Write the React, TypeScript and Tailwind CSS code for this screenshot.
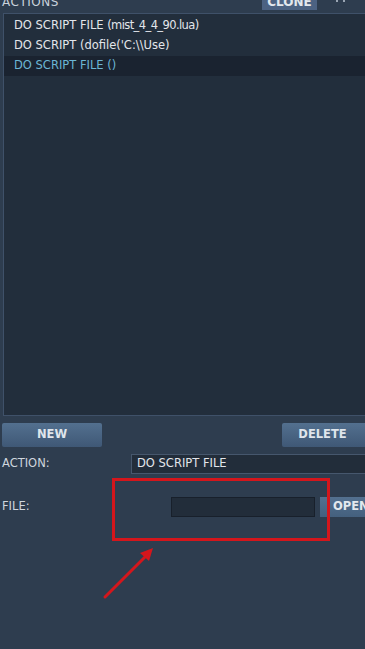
import React from "react";

const font = { fontFamily: '"DejaVu Sans", Verdana, sans-serif' };

export default function App() {
  return (
    <div
      className="relative w-[365px] h-[649px] overflow-hidden bg-[#2e3d4f] text-[#d7dde4]"
      style={font}
    >
      {/* header row (cut off at the top) */}
      <div className="flex items-center h-[22px] -mt-[9px] pl-[2px]">
        <span className="text-[12px] tracking-[0.5px] text-[#c9d2dc]">ACTIONS</span>
        <div className="ml-auto mr-[48px] w-[55px] h-[16px] flex items-center justify-center bg-[#4c6282] text-[12px] font-bold text-[#e3e8ee]">
          CLONE
        </div>
      </div>
      <div className="absolute left-[336px] top-0 w-[2px] h-[2px] bg-[#9aa6b4]" />
      <div className="absolute left-[343px] top-0 w-[2px] h-[2px] bg-[#9aa6b4]" />

      {/* list */}
      <div className="ml-[3px] mr-[-4px] h-[403px] border border-[#3f5169] bg-[#222e3c] pt-[2px]">
        <div className="h-[20px] flex items-center pl-[10px] text-[11.5px] text-[#e2e6eb] whitespace-pre">
          DO SCRIPT FILE <span className="tracking-[-0.6px]">(mist_4_4_90.lua)</span>
        </div>
        <div className="h-[20px] flex items-center pl-[10px] text-[11.5px] text-[#e2e6eb]">
          DO SCRIPT (dofile('C:\\Use)
        </div>
        <div className="h-[20px] flex items-center pl-[10px] text-[11.5px] text-[#6cb6d4] bg-[#1a2330]">
          DO SCRIPT FILE ()
        </div>
      </div>

      {/* buttons */}
      <div className="flex mt-[7px] h-[24px]">
        <div className="ml-[2px] w-[100px] rounded-[2px] flex items-center justify-center bg-gradient-to-b from-[#53708f] to-[#3f5876] text-[11.5px] font-bold text-[#dfe5ec]">
          NEW
        </div>
        <div className="ml-auto mr-[-4px] w-[87px] rounded-[2px] flex items-center justify-center bg-gradient-to-b from-[#53708f] to-[#3f5876] text-[11.5px] font-bold text-[#dfe5ec] pr-[6px]">
          DELETE
        </div>
      </div>

      {/* action row */}
      <div className="flex items-center mt-[7px] h-[20px]">
        <span className="ml-[2px] w-[129px] text-[11.5px] text-[#cfd6de]">ACTION:</span>
        <div className="flex-1 mr-[-4px] h-[20px] flex items-center pl-[5px] border border-[#46576d] bg-[#222d3a] text-[11.5px] text-[#e2e6eb]">
          DO SCRIPT FILE
        </div>
      </div>

      {/* file row */}
      <div className="flex items-center mt-[23px] h-[20px]">
        <span className="ml-[2px] w-[169px] text-[11.5px] text-[#cfd6de]">FILE:</span>
        <div className="w-[144px] h-[20px] border border-[#18202b] bg-[#222d3a]" />
        <div className="ml-[5px] flex-1 h-[20px] flex items-center pl-[13px] bg-gradient-to-b from-[#53708f] to-[#44607e] text-[11.5px] font-bold text-[#e3e8ee] whitespace-nowrap overflow-hidden">
          OPEN
        </div>
      </div>

      {/* red annotation */}
      <svg
        className="absolute left-0 top-0 pointer-events-none"
        width="365"
        height="649"
        viewBox="0 0 365 649"
      >
        <rect x="113.5" y="479.5" width="215" height="60" fill="none" stroke="#d4161c" strokeWidth="3" />
        <line x1="105" y1="597" x2="146" y2="556" stroke="#d4161c" strokeWidth="3" strokeLinecap="round" />
        <polygon points="153,548 140,553 149,561" fill="#d4161c" />
      </svg>
    </div>
  );
}
